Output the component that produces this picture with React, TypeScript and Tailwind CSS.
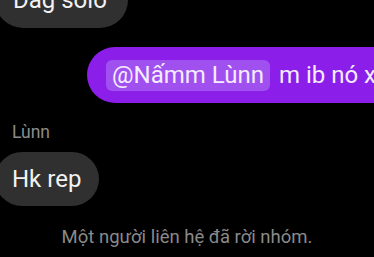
export default function App() {
  return (
    <div className="w-[374px] h-[257px] overflow-hidden bg-black flex flex-col font-['Roboto',sans-serif]">
      {/* tin nhắn trước, bị cắt phía trên */}
      <div className="self-start ml-[-5px] mt-[-28px] h-[56px] rounded-full bg-[#303030] pl-[18px] pr-[21px] flex items-center text-[24px] text-[#f2f2f2] whitespace-nowrap">
        Dag solo
      </div>

      {/* tin nhắn của mình */}
      <div className="ml-[87px] mt-[19px] h-[56px] rounded-l-full bg-[#8b1ee9] pl-[19px] flex items-center gap-[9px] text-[24px] text-[#f4ecff] whitespace-nowrap w-[340px]">
        <span className="h-[31px] rounded-[6px] bg-[#a150f0] px-[6px] flex items-center">@Nấmm Lùnn</span>
        <span>m ib nó xem</span>
      </div>

      {/* tin nhắn đến */}
      <div className="ml-[12px] mt-[19px] text-[17.5px] leading-[21px] text-[#8c8c8c]">Lùnn</div>
      <div className="self-start ml-[-5px] mt-[9px] h-[54px] rounded-full bg-[#303030] pl-[17px] pr-[18px] flex items-center text-[24px] text-[#f2f2f2] whitespace-nowrap">
        Hk rep
      </div>

      <div className="mt-[20px] text-center text-[18.5px] leading-[22px] text-[#8a8a8a]">
        Một người liên hệ đã rời nhóm.
      </div>
    </div>
  );
}
